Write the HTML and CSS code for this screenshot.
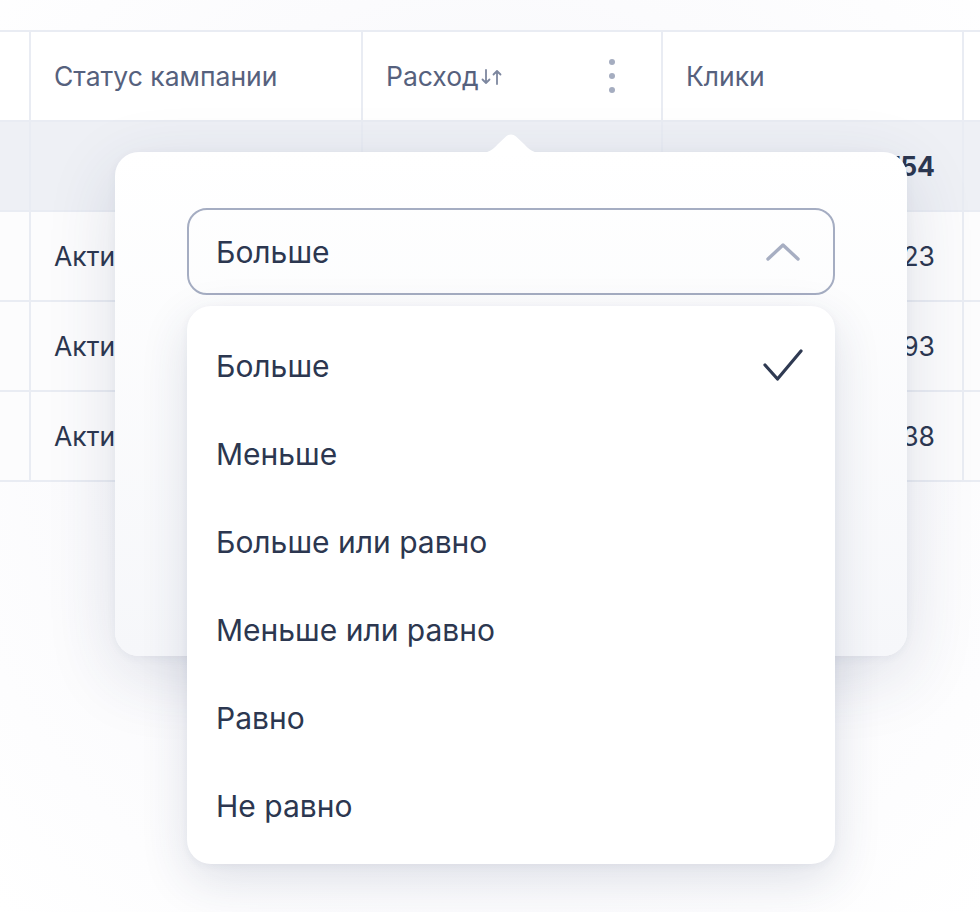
FILE: index.html
```html
<!DOCTYPE html>
<html lang="ru">
<head>
  <meta charset="UTF-8">
  <meta name="viewport" content="width=device-width, initial-scale=1.0">
  <title>Кампании</title>
  <link rel="stylesheet" href="styles.css">
</head>
<body>
  <div class="page">
    <div class="table">
      <div class="row head">
        <div class="cell edge"></div>
        <div class="cell">Статус кампании</div>
        <div class="cell sortable">
          <span>Расход</span>
          <svg class="sort" width="22" height="20" viewBox="0 0 22 20">
            <path d="M5 3v13M1.5 12.5L5 16l3.5-3.5M16 17V4M12.5 7.5L16 4l3.5 3.5" fill="none" stroke="#7d879f" stroke-width="1.8" stroke-linecap="round" stroke-linejoin="round"/>
          </svg>
          <span class="kebab"><i></i><i></i><i></i></span>
        </div>
        <div class="cell">Клики</div>
        <div class="cell edge"></div>
      </div>
      <div class="row total">
        <div class="cell edge"></div>
        <div class="cell"></div>
        <div class="cell"></div>
        <div class="cell num"><b>2 754</b></div>
        <div class="cell edge"></div>
      </div>
      <div class="row">
        <div class="cell edge"></div>
        <div class="cell">Активна</div>
        <div class="cell num">12 480 ₽</div>
        <div class="cell num">1 123</div>
        <div class="cell edge"></div>
      </div>
      <div class="row">
        <div class="cell edge"></div>
        <div class="cell">Активна</div>
        <div class="cell num">9 310 ₽</div>
        <div class="cell num">893</div>
        <div class="cell edge"></div>
      </div>
      <div class="row">
        <div class="cell edge"></div>
        <div class="cell">Активна</div>
        <div class="cell num">7 905 ₽</div>
        <div class="cell num">738</div>
        <div class="cell edge"></div>
      </div>
    </div>

    <!-- фильтр по столбцу "Расход" -->
    <div class="popover">
      <svg class="arrow" width="80" height="20" viewBox="0 0 80 20">
        <path d="M0 20C14 20 20 18 27 10L35 2.5C37.8 -0.3 42.2 -0.3 45 2.5L53 10C60 18 66 20 80 20Z" fill="#fff"/>
      </svg>
      <div class="select">
        <span>Больше</span>
        <svg width="36" height="20" viewBox="0 0 36 20">
          <path d="M3 17L18 3l15 14" fill="none" stroke="#a7aec2" stroke-width="3.4" stroke-linecap="round" stroke-linejoin="round"/>
        </svg>
      </div>
    </div>

    <ul class="menu">
      <li class="selected">
        <span>Больше</span>
        <svg width="40" height="34" viewBox="0 0 40 34">
          <path d="M2 16l12.5 14L38 2" fill="none" stroke="#2f3a52" stroke-width="3.2" stroke-linecap="round" stroke-linejoin="round"/>
        </svg>
      </li>
      <li>Меньше</li>
      <li>Больше или равно</li>
      <li>Меньше или равно</li>
      <li>Равно</li>
      <li>Не равно</li>
    </ul>
  </div>
</body>
</html>
```

FILE: styles.css
```css
* {
  margin: 0;
  padding: 0;
  box-sizing: border-box;
}
html, body {
  height: 100%;
  background: #fff;
  font-family: Inter, "Noto Sans", sans-serif;
  color: #2c3750;
}
.page {
  position: relative;
  height: 912px;
  overflow: hidden;
  background: radial-gradient(ellipse at 50% 45%, #f1f3f7 0%, #fbfbfd 60%, #fff 100%);
}
.table {
  padding-top: 30px;
}
.row {
  display: grid;
  grid-template-columns: 29px 332px 300px 301px 1fr;
  height: 90px;
  border-top: 2px solid #e9ecf3;
}
.row:last-child {
  border-bottom: 2px solid #e9ecf3;
  height: 92px;
}
.row.head {
  background: #fff;
  color: #56617d;
}
.row.total {
  background: #eef0f5;
}
.row:not(.head):not(.total) {
  background: #fcfcfd;
}
.cell {
  display: flex;
  align-items: center;
  padding: 0 23px;
  font-size: 26.5px;
  border-left: 2px solid #e9ecf3;
  white-space: nowrap;
  overflow: hidden;
}
.cell:first-child {
  border-left: none;
}
.cell.num {
  justify-content: flex-end;
  padding-right: 27px;
}
.cell b {
  font-weight: 700;
}
.sortable .sort {
  margin-left: 2px;
  margin-top: 2px;
}
.kebab {
  display: flex;
  flex-direction: column;
  gap: 8px;
  margin-left: auto;
  margin-right: 23px;
}
.kebab i {
  width: 6px;
  height: 6px;
  border-radius: 50%;
  background: #a5adc0;
}

.popover {
  position: absolute;
  left: 115px;
  top: 152px;
  width: 792px;
  height: 504px;
  padding: 56px 72px 0;
  border-radius: 24px;
  background: linear-gradient(180deg, #fff 0%, #f6f7fa 100%);
  box-shadow: 0 20px 70px rgba(40, 55, 100, 0.14), 0 2px 10px rgba(40, 55, 100, 0.05);
}
.popover .arrow {
  position: absolute;
  left: 356px;
  top: -18px;
}
.select {
  display: flex;
  align-items: center;
  justify-content: space-between;
  height: 87px;
  padding: 0 32px 0 27px;
  border: 2px solid #a5adc2;
  border-radius: 20px;
  font-size: 30px;
}

.menu {
  position: absolute;
  left: 187px;
  top: 306px;
  width: 648px;
  padding: 16px 0 14px;
  list-style: none;
  background: #fff;
  border-radius: 24px;
  box-shadow: 0 16px 48px rgba(40, 55, 100, 0.14), 0 2px 8px rgba(40, 55, 100, 0.05);
}
.menu li {
  display: flex;
  align-items: center;
  justify-content: space-between;
  height: 88px;
  padding: 0 32px 0 29px;
  font-size: 30px;
}
```
